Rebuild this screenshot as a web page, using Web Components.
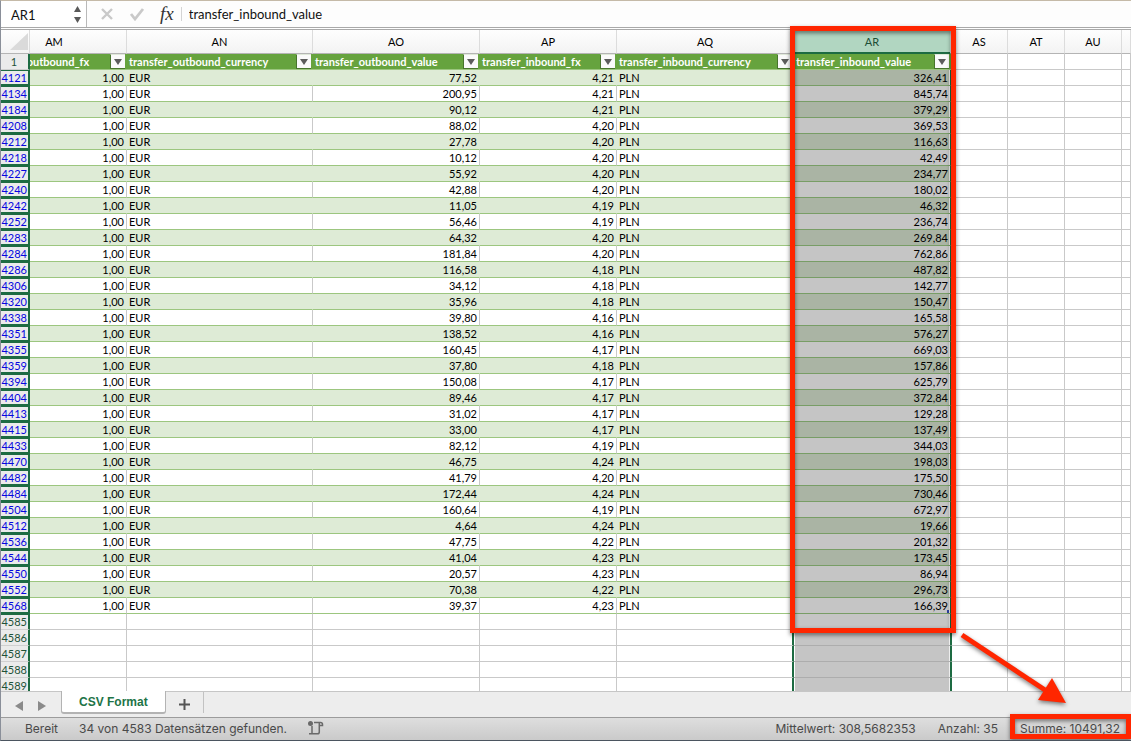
<!DOCTYPE html>
<html lang="de">
<head>
<meta charset="utf-8">
<meta name="viewport" content="width=device-width, initial-scale=1">
<title>CSV Format</title>
<style>
  body { margin: 0; }
</style>
</head>
<body>
<sheet-window>
  <formula-bar cell="AR1" value="transfer_inbound_value"></formula-bar>
  <sheet-grid></sheet-grid>
  <sheet-tabs><span>CSV Format</span></sheet-tabs>
  <status-bar>
    <span>Bereit</span>
    <span>34 von 4583 Datensätzen gefunden.</span>
    <span slot="end">Mittelwert: 308,5682353</span>
    <span slot="end">Anzahl: 35</span>
    <span slot="end">Summe: 10491,32</span>
  </status-bar>
  <red-marks slot="marks"></red-marks>
</sheet-window>
<script>
function define(name, html, setup) {
  const template = document.createElement('template');
  template.innerHTML = html;
  customElements.define(name, class extends HTMLElement {
    connectedCallback() {
      if (this.shadowRoot) return;
      const root = this.attachShadow({ mode: 'open' });
      root.append(template.content.cloneNode(true));
      if (setup) setup(this, root);
    }
  });
}

define('sheet-window', `
<style>
  :host { display: flex; flex-direction: column; position: relative; box-sizing: border-box; height: 100vh; min-height: 300px; overflow: hidden;
    border-top: 1px solid #c5baa8; border-left: 1px solid #8a8f99; border-bottom: 1px solid #4b5560;
    font-family: Lato, "Open Sans", sans-serif; font-size: 11px; color: #000; background: #fff; }
</style>
<slot></slot><slot name="marks"></slot>`);

define('formula-bar', `
<style>
  :host { display: flex; flex: none; height: 26px; align-items: stretch; background: #fdfdfd; border-bottom: 1px solid #a9a9a9; }
  input { border: 0; padding: 0; margin: 0; outline: 0; background: transparent; color: #111; font: 13px Lato, sans-serif; min-width: 0; }
  .name { display: flex; width: 85px; border-right: 1px solid #b9b9b9; background: #fff; }
  .name input { flex: 1; padding-left: 10px; padding-top: 1px; }
  .steps { display: flex; flex-direction: column; justify-content: center; gap: 5px; width: 18px; }
  button { border: 0; padding: 0; background: none; display: grid; place-items: center; }
  svg { display: block; }
  .tools { display: flex; align-items: center; gap: 15px; padding: 0 7px 0 13px; }
  .fx { font: italic 19px "Liberation Serif", serif; color: #333; }
  .value { flex: 1; border-left: 1px solid #d4d4d4; margin: 6px 0; padding-left: 7px; }
</style>
<div class="name">
  <input aria-label="Namenfeld">
  <div class="steps">
    <button aria-label="Nach oben"><svg width="7" height="6"><path d="M3.500 0L7 6H0z" fill="#595959"/></svg></button>
    <button aria-label="Nach unten"><svg width="7" height="6"><path d="M3.500 6L7 0H0z" fill="#595959"/></svg></button>
  </div>
</div>
<div class="tools">
  <button aria-label="Abbrechen"><svg width="14" height="14"><path d="M2 2L12 12M12 2L2 12" stroke="#c9c9c9" stroke-width="2.400"/></svg></button>
  <button aria-label="Eingeben"><svg width="16" height="14"><path d="M2 7L6 12L14 2" fill="none" stroke="#c9c9c9" stroke-width="2.800"/></svg></button>
  <button class="fx" aria-label="Funktion einfügen">fx</button>
</div>
<input class="value" aria-label="Bearbeitungsleiste">`, (host, root) => {
  root.querySelector('.name input').value = host.getAttribute('cell');
  root.querySelector('.value').value = host.getAttribute('value');
});

const rows = `4121 77,52 4,21 326,41
4134 200,95 4,21 845,74
4184 90,12 4,21 379,29
4208 88,02 4,20 369,53
4212 27,78 4,20 116,63
4218 10,12 4,20 42,49
4227 55,92 4,20 234,77
4240 42,88 4,20 180,02
4242 11,05 4,19 46,32
4252 56,46 4,19 236,74
4283 64,32 4,20 269,84
4284 181,84 4,20 762,86
4286 116,58 4,18 487,82
4306 34,12 4,18 142,77
4320 35,96 4,18 150,47
4338 39,80 4,16 165,58
4351 138,52 4,16 576,27
4355 160,45 4,17 669,03
4359 37,80 4,18 157,86
4394 150,08 4,17 625,79
4404 89,46 4,17 372,84
4413 31,02 4,17 129,28
4415 33,00 4,17 137,49
4433 82,12 4,19 344,03
4470 46,75 4,24 198,03
4482 41,79 4,20 175,50
4484 172,44 4,24 730,46
4504 160,64 4,19 672,97
4512 4,64 4,24 19,66
4536 47,75 4,22 201,32
4544 41,04 4,23 173,45
4550 20,57 4,23 86,94
4552 70,38 4,22 296,73
4568 39,37 4,23 166,39`.split('\n').map(line => line.split(' '));

define('filter-button', `
<style>
  :host { display: block; flex: none; }
  button { display: grid; place-items: center; width: 15px; height: 15px; box-sizing: border-box; padding: 0; border: 1px solid #47742c; border-top-color: #dfe8d9; border-right-width: 0; background: #fafafa; }
  svg { display: block; }
</style>
<button aria-label="Filter"><svg width="8" height="6"><path d="M0 0H8L4 6z" fill="#5c5c5c"/></svg></button>`);

define('sheet-grid', `
<style>
  :host { display: block; flex: 1; min-height: 0; overflow: hidden; margin-top: 1px; border-top: 1px solid #a9a9a9; --hidden-part: 48px; }
  table { width: 100%; border-collapse: separate; border-spacing: 0; table-layout: fixed; }
  th, td { box-sizing: border-box; height: 16px; padding: 0 2px; line-height: 15px; vertical-align: top; border: 0 solid #c9c9c9; border-width: 0 1px 1px 0; overflow: hidden; white-space: nowrap; text-align: left; font-weight: normal; }
  thead tr:first-child > * { height: 24px; line-height: 23px; padding: 0; text-align: center; background: linear-gradient(#fefefe, #f3f3f3); border-color: #dcdcdc; border-bottom-color: #b4b4b4; }
  thead tr:first-child .ar { background: #b1d6c1; color: #1d4f36; border-bottom-color: #1d6b42; box-shadow: inset 0 -1px #1d6b42; }
  .cut { padding-left: 0; }
  .cut > div { margin-left: calc(-1 * var(--hidden-part)); }
  .cut span { padding-left: 1px; }
  .corner svg { display: block; margin: 3px 0 0 9px; }
  .no { background: #ebebeb; color: #0505e0; padding: 0 1px 0 0; text-align: right; border-right: 2px solid #1d6b42; border-bottom-color: #1d6b42; }
  .data .no { box-shadow: inset 0 1px #1d6b42, inset 0 -1px #1d6b42; }
  .data + .sel .no { box-shadow: inset 0 1px #1d6b42; }
  .no.plain { color: #1e5238; border-bottom-color: #d0d0d0; }
  .no.one { text-align: center; }
  .field { background: #66a33e; color: #fff; font-weight: bold; border-color: #9cc67f; padding-right: 0; border-right-width: 0; }
  .field > div { display: flex; justify-content: space-between; padding-right: 2px; }
  .data td { border-bottom-color: #9cc67f; }
  .band td { background: #deebd6; border-right-color: #deebd6; }
  .data .out { background: #fff; border-color: #c9c9c9; }
  td.r { text-align: right; }
  td.ar { background: #c5c5c5; border-bottom-color: #adadad; border-right-color: #1d6b42; box-shadow: inset 1px 0 #fff, inset -1px 0 #eee; }
  .data td.ar { border-bottom-color: #789d66; }
  .band td.ar { background: #aab4a4; }
  .sel .ar + td { border-left: 1px solid #1d6b42; }
  .sel td.aq { border-right: 2px solid #1d6b42; }
  .end td.ar { background: linear-gradient(#2b3f9e, #2b3f9e) right bottom / 3px 3px no-repeat #c5c5c5; }
</style>
<table>
  <colgroup><col style="width:29px"><col style="width:97px"><col style="width:186px"><col style="width:167px"><col style="width:137px"><col style="width:177px"><col style="width:157px"><col style="width:57px"><col style="width:57px"><col style="width:57px"><col></colgroup>
  <thead></thead><tbody></tbody>
</table>`, (host, root) => {
  const names = ['AM', 'AN', 'AO', 'AP', 'AQ', 'AR', 'AS', 'AT', 'AU', ''];
  const fields = ['transfer_outbound_fx', 'transfer_outbound_currency', 'transfer_outbound_value', 'transfer_inbound_fx', 'transfer_inbound_currency', 'transfer_inbound_value'];
  const rest = '<td class="out"></td>'.repeat(4);
  const cls = i => i === 0 ? 'cut' : i === 4 ? 'aq' : i === 5 ? 'ar' : '';
  root.querySelector('thead').innerHTML =
    '<tr><th class="corner"><svg width="18" height="17"><path d="M18 0V17H0z" fill="#dadada"/></svg></th>' +
    names.map((n, i) => `<th scope="col" class="${cls(i)}"><div>${n}</div></th>`).join('') + '</tr>' +
    '<tr><th scope="row" class="no plain one">1</th>' +
    fields.map((f, i) => `<th class="field ${cls(i)}"><div><span>${f}</span><filter-button></filter-button></div></th>`).join('') + rest + '</tr>';
  root.querySelector('tbody').innerHTML =
    rows.map(([no, out, fx, value], i) => `<tr class="data ${i % 2 ? '' : 'band'} ${i === rows.length - 1 ? 'end' : ''}"><th scope="row" class="no">${no}</th><td class="r">1,00</td><td>EUR</td><td class="r">${out}</td><td class="r">${fx}</td><td>PLN</td><td class="r ar">${value}</td>${rest}</tr>`).join('') +
    [4585, 4586, 4587, 4588, 4589].map(no => `<tr class="sel"><th scope="row" class="no plain">${no}</th>${'<td></td>'.repeat(4)}<td class="aq"></td><td class="ar"></td>${rest}</tr>`).join('');
});

define('sheet-tabs', `
<style>
  :host { display: flex; flex: none; height: 25px; background: #ededed; border-top: 1px solid #c6c6c6; }
  button { border: 0; padding: 0; background: none; display: grid; place-items: center; }
  .nav { display: flex; gap: 15px; padding: 2px 15px 0 14px; align-items: center; }
  .tab { height: 23px; margin-top: -1px; padding: 0 17px; background: #fff; border: 1px solid #b3b3b3; border-width: 0 1px 2px; border-radius: 0 0 3px 3px; font: bold 12px "Liberation Sans", sans-serif; color: #217346; }
  .add { width: 38px; height: 21px; padding-top: 3px; border-right: 1px solid #c2c2c2; }
</style>
<div class="nav">
  <button aria-label="Vorheriges Blatt"><svg width="8" height="10"><path d="M8 0V10L0 5z" fill="#8a8a8a"/></svg></button>
  <button aria-label="Nächstes Blatt"><svg width="8" height="10"><path d="M0 0V10L8 5z" fill="#8a8a8a"/></svg></button>
</div>
<button class="tab"><slot></slot></button>
<button class="add" aria-label="Blatt hinzufügen"><svg width="11" height="11"><path d="M5.500 0V11M0 5.500H11" stroke="#555" stroke-width="2"/></svg></button>`);

define('status-bar', `
<style>
  :host { display: flex; flex: none; align-items: center; justify-content: space-between; box-sizing: border-box; height: 23px; padding: 0 11px 2px 24px; background: linear-gradient(#dedede, #cacaca); border-top: 1px solid #9c9c9c; color: #4a4a4a; font: 12px Inter, sans-serif; white-space: nowrap; }
  div { display: flex; align-items: center; gap: 21px; }
  .totals { gap: 22px; }
  button { border: 0; padding: 0; background: none; display: block; }
  svg { display: block; }
</style>
<div><slot></slot><button aria-label="Makro aufzeichnen"><svg width="16" height="14" fill="none" stroke="#696969" stroke-width="1.500"><circle cx="2.500" cy="2.500" r="2.500" fill="#696969" stroke="none"/><path d="M6 1.500H12.500Q14.500 1.500 14.500 3.500V4.500H11M11.300 2V11Q11.300 12.800 9.500 12.800H1M4 5V12"/></svg></button></div>
<div class="totals"><slot name="end"></slot></div>`);

define('red-marks', `
<style>
  :host { display: block; position: absolute; inset: 0; pointer-events: none; }
  .box { position: absolute; box-sizing: border-box; border: 5px solid #ff2600; filter: drop-shadow(0 2px 2px rgba(0,0,0,.5)); }
  .column { left: 789px; top: 25px; width: 166px; height: 607px; }
  .sum { right: 0; bottom: 1px; width: 121px; height: 25px; }
  svg { position: absolute; left: 955px; top: 625px; filter: drop-shadow(0 2px 2px rgba(0,0,0,.5)); }
</style>
<div class="box column"></div>
<div class="box sum"></div>
<svg width="120" height="90"><path d="M6 9L89 64" stroke="#ff2600" stroke-width="5"/><path d="M96 52L82 74L110 77z" fill="#ff2600"/></svg>`);
</script>
</body>
</html>
